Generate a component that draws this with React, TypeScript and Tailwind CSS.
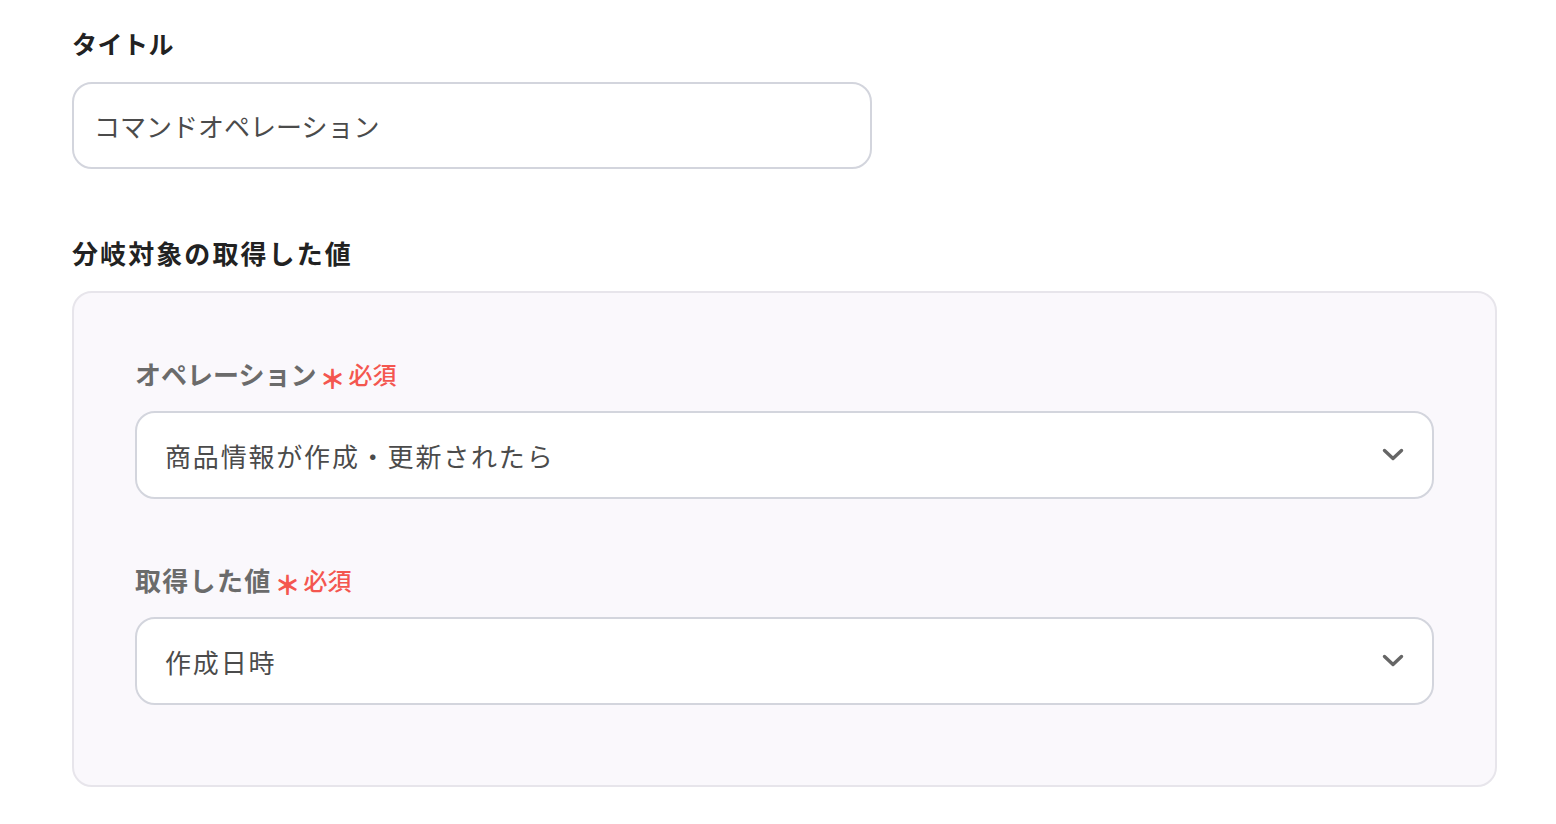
const font = { fontFamily: '"Noto Sans CJK JP", "Noto Sans", sans-serif' };

function Required() {
  return (
    <span className="ml-[3px] inline-flex items-center text-[#f4564f]">
      <span className="mt-[8px] text-[26px] font-black leading-none">＊</span>
      <span className="ml-[3px] text-[24px] font-medium">必須</span>
    </span>
  );
}

function Chevron() {
  return (
    <svg width="22" height="14" viewBox="0 0 22 14" fill="none" className="text-[#666]">
      <polyline
        points="2.5,2.5 11,10.5 19.5,2.5"
        stroke="currentColor"
        strokeWidth="3.4"
        strokeLinecap="round"
        strokeLinejoin="round"
      />
    </svg>
  );
}

function SelectBox({ value }: { value: string }) {
  return (
    <div className="flex h-[88px] items-center justify-between rounded-[20px] border-2 border-[#d3d5dd] bg-white pl-[28px] pr-[28px]">
      <span className="text-[26px] tracking-[0.07em] text-[#4b4b4b]">{value}</span>
      <Chevron />
    </div>
  );
}

export default function App() {
  return (
    <div className="min-h-screen bg-white pl-[72px] pr-[60px] pt-[25px]" style={font}>
      <h2 className="text-[25px] font-bold leading-[36px] tracking-[0.02em] text-[#222]">タイトル</h2>
      <div className="mt-[21px] flex h-[87px] w-[800px] items-center rounded-[20px] border-2 border-[#d3d5dd] bg-white pl-[20px]">
        <span className="text-[26px] text-[#4b4b4b]">コマンドオペレーション</span>
      </div>

      <h2 className="mt-[66px] text-[26px] font-bold leading-[36px] tracking-[0.08em] text-[#222]">
        分岐対象の取得した値
      </h2>
      <div className="mt-[20px] w-[1425px] rounded-[20px] border-2 border-[#e7e5eb] bg-[#faf8fc] px-[61px] pb-[80px] pt-[63px]">
        <div className="flex items-center leading-[36px]">
          <span className="text-[26px] font-bold text-[#6b6b6b]">オペレーション</span>
          <Required />
        </div>
        <div className="mt-[19px]">
          <SelectBox value="商品情報が作成・更新されたら" />
        </div>

        <div className="mt-[63px] flex items-center leading-[36px]">
          <span className="text-[26px] font-bold tracking-[0.05em] text-[#6b6b6b]">取得した値</span>
          <Required />
        </div>
        <div className="mt-[19px]">
          <SelectBox value="作成日時" />
        </div>
      </div>
    </div>
  );
}
